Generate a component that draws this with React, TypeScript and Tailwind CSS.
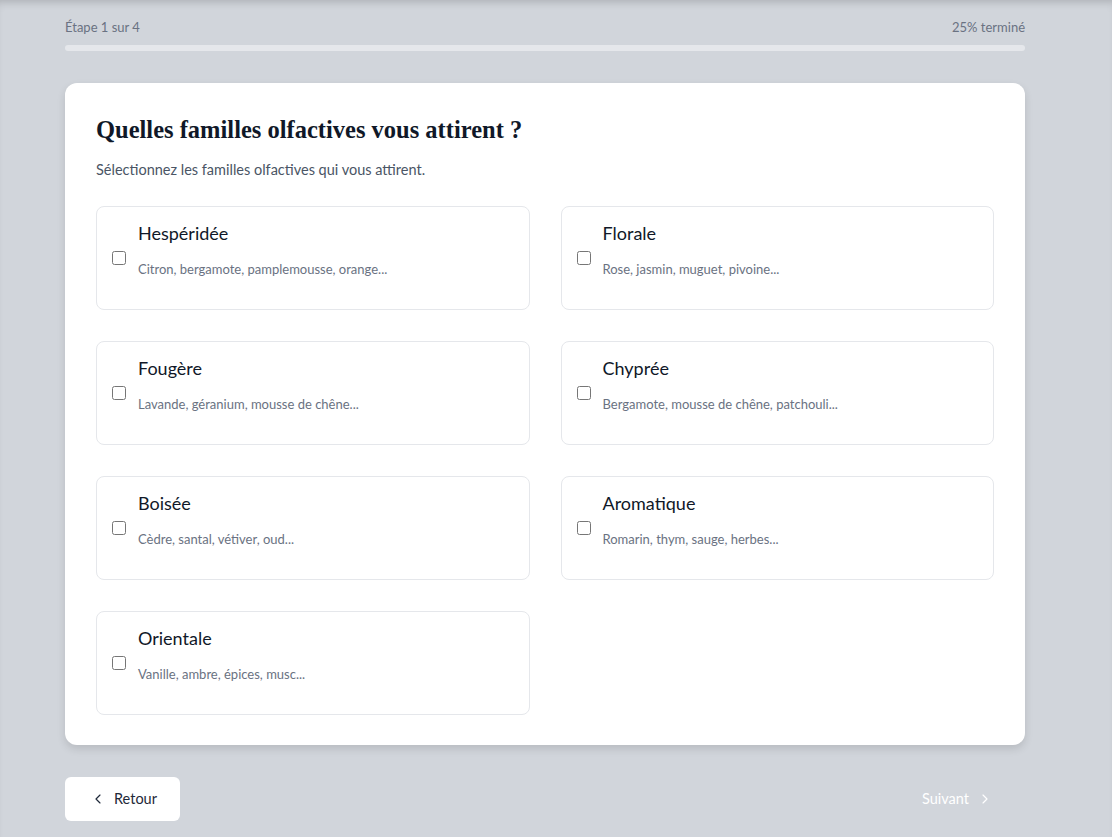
import { ChevronLeft, ChevronRight } from 'lucide-react';

// Familles olfactives proposées au premier écran du questionnaire
const families = [
  { name: 'Hespéridée', notes: 'Citron, bergamote, pamplemousse, orange...' },
  { name: 'Florale', notes: 'Rose, jasmin, muguet, pivoine...' },
  { name: 'Fougère', notes: 'Lavande, géranium, mousse de chêne...' },
  { name: 'Chyprée', notes: 'Bergamote, mousse de chêne, patchouli...' },
  { name: 'Boisée', notes: 'Cèdre, santal, vétiver, oud...' },
  { name: 'Aromatique', notes: 'Romarin, thym, sauge, herbes...' },
  { name: 'Orientale', notes: 'Vanille, ambre, épices, musc...' },
];

function FamilyOption({ name, notes }: { name: string; notes: string }) {
  return (
    <label className="flex h-[104px] items-center gap-3 rounded-lg border border-gray-200 bg-white px-4 cursor-pointer">
      <input type="checkbox" className="h-[14px] w-[14px] shrink-0 mt-[-1px] ml-[-1px]" />
      <div className="self-start pt-[12px]">
        <div className="text-lg leading-7 text-gray-900">{name}</div>
        <div className="mt-[14px] text-[13px] leading-4 text-gray-500">{notes}</div>
      </div>
    </label>
  );
}

export default function App() {
  return (
    <div
      className="min-h-screen bg-[#d1d5db] shadow-[inset_0_7px_8px_-5px_rgba(0,0,0,0.18)]"
      style={{ fontFamily: 'Lato, "Open Sans", sans-serif' }}
    >
      <div className="ml-[65px] w-[960px] pt-[19px]">
        {/* Progression */}
        <div className="flex justify-between text-[13px] leading-4 text-gray-500">
          <span>Étape 1 sur 4</span>
          <span>25% terminé</span>
        </div>
        <div className="mt-[10px] h-1.5 w-full rounded-full bg-gray-200" />

        {/* Carte de la question */}
        <div className="mt-8 rounded-xl bg-white px-[31px] pt-[31px] pb-[30px] shadow-[0_4px_8px_rgba(0,0,0,0.12)]">
          <h1
            className="text-[24.5px] font-bold leading-8 text-gray-900"
            style={{ fontFamily: '"Liberation Serif", "DejaVu Serif", serif' }}
          >
            Quelles familles olfactives vous attirent ?
          </h1>
          <p className="mt-[14px] text-[14.5px] leading-5 text-gray-600">
            Sélectionnez les familles olfactives qui vous attirent.
          </p>
          <div className="mt-[26px] grid grid-cols-2 gap-[31px]">
            {families.map((f) => (
              <FamilyOption key={f.name} name={f.name} notes={f.notes} />
            ))}
          </div>
        </div>

        {/* Navigation */}
        <div className="mt-8 flex items-center justify-between">
          <button className="flex h-11 items-center gap-2 rounded-md bg-white pl-[25px] pr-[23px] text-[14.5px] text-gray-800">
            <ChevronLeft className="h-4 w-4" strokeWidth={1.75} />
            Retour
          </button>
          <button className="flex h-11 items-center gap-2 px-8 text-[14.5px] text-white" disabled>
            Suivant
            <ChevronRight className="h-4 w-4" strokeWidth={1.75} />
          </button>
        </div>
      </div>
    </div>
  );
}
